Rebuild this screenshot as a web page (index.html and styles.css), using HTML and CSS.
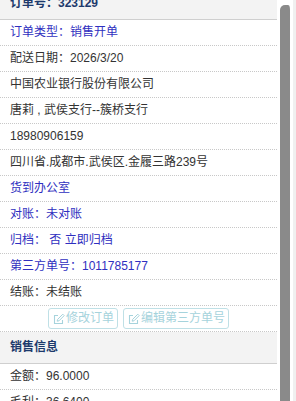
FILE: index.html
```html
<!DOCTYPE html>
<html lang="zh-CN">
<head>
  <meta charset="UTF-8">
  <meta name="viewport" content="width=device-width, initial-scale=1">
  <title>订单详情</title>
  <link rel="stylesheet" href="styles.css">
</head>
<body>
  <div class="page">
    <div class="content">
      <div class="panel-title">订单号：323129</div>
      <div class="row blue">订单类型：销售开单</div>
      <div class="row">配送日期：2026/3/20</div>
      <div class="row">中国农业银行股份有限公司</div>
      <div class="row">唐莉 , 武侯支行--簇桥支行</div>
      <div class="row">18980906159</div>
      <div class="row">四川省.成都市.武侯区.金履三路239号</div>
      <div class="row blue">货到办公室</div>
      <div class="row blue">对账：未对账</div>
      <div class="row blue">归档： 否 <span class="link">立即归档</span></div>
      <div class="row blue">第三方单号：1011785177</div>
      <div class="row">结账：未结账</div>
      <div class="row actions">
        <span class="btn">
          <svg class="icon" viewBox="0 0 12 12" width="12" height="12">
            <path d="M9.5 7v3.5h-8v-8H5" fill="none" stroke="currentColor" stroke-width="1.1"/>
            <path d="M4.2 8.2l.4-1.8 5.2-5.2 1.4 1.4-5.2 5.2z" fill="none" stroke="currentColor" stroke-width="1"/>
          </svg>修改订单</span>
        <span class="btn">
          <svg class="icon" viewBox="0 0 12 12" width="12" height="12">
            <path d="M9.5 7v3.5h-8v-8H5" fill="none" stroke="currentColor" stroke-width="1.1"/>
            <path d="M4.2 8.2l.4-1.8 5.2-5.2 1.4 1.4-5.2 5.2z" fill="none" stroke="currentColor" stroke-width="1"/>
          </svg>编辑第三方单号</span>
      </div>
      <div class="panel-title">销售信息</div>
      <div class="row">金额：96.0000</div>
      <div class="row">毛利：36.6400</div>
    </div>
    <div class="scrollbar">
      <div class="thumb"></div>
    </div>
  </div>
</body>
</html>
```

FILE: styles.css
```css
body {
  margin: 0;
  font-family: 'Liberation Sans', 'Noto Sans CJK SC', sans-serif;
  font-size: 12px;
  color: #333;
  background: #fff;
  overflow: hidden;
}

.page {
  display: flex;
  height: 401px;
}

.content {
  width: 277px;
  margin-top: -12px;
}

.panel-title {
  height: 31px;
  line-height: 31px;
  padding-left: 10px;
  background-color: #f3f3f3;
  border-bottom: 1px solid #cfcfcf;
  color: #1d3a6c;
  font-weight: bold;
}

.row {
  height: 25px;
  line-height: 25px;
  padding-left: 10px;
  border-bottom: 1px dotted #c8c8c8;
  white-space: nowrap;
}

.blue {
  color: #2f2fc0;
}

.actions {
  display: flex;
  justify-content: center;
  align-items: center;
  gap: 5px;
  padding-left: 0;
}

.btn {
  display: flex;
  align-items: center;
  height: 19px;
  padding: 0 3px 0 4px;
  border: 1px solid #bfe0e6;
  border-radius: 3px;
  color: #a6d3dc;
  line-height: 19px;
}

.icon {
  margin-right: 1px;
}

.scrollbar {
  flex: 1;
  display: flex;
  padding-left: 3px;
  border-right: 3px solid #f0f0f0;
}

.thumb {
  width: 10px;
  margin-top: 5px;
  background-color: #8a8a8a;
  border-radius: 5px 5px 0 0;
  border-right: 3px solid #fff;
}
```
